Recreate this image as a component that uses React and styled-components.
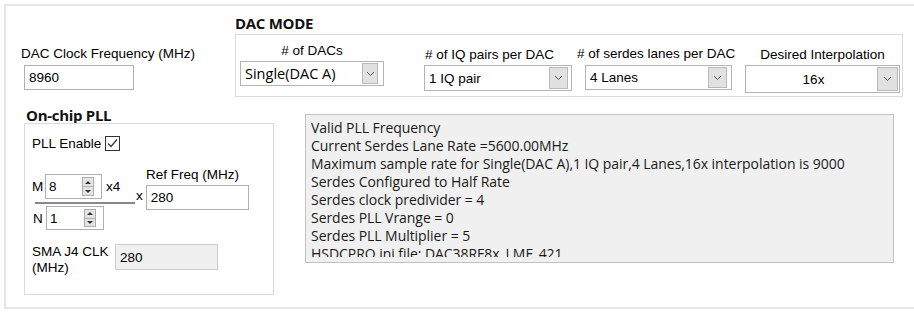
import React from "react";
import styled, { createGlobalStyle } from "styled-components";

const GlobalStyle = createGlobalStyle`
  html, body {
    margin: 0;
    padding: 0;
    background: #ffffff;
    overflow: hidden;
  }
  body {
    font-family: "Liberation Sans", Arial, sans-serif;
    font-size: 13.5px;
    color: #000000;
  }
`;

const Page = styled.div`
  width: 914px;
  height: 313px;
  padding: 4px 0 0 4px;
  box-sizing: border-box;
  overflow: hidden;
`;

const Frame = styled.div`
  width: 930px;
  height: 305px;
  box-sizing: border-box;
  border: 2px solid #e6e6e6;
  display: flex;
  flex-direction: column;
`;

const TopRow = styled.div`
  display: flex;
  align-items: flex-start;
  height: 91px;
`;

const ClockField = styled.div`
  width: 229px;
  padding: 40px 0 0 15px;
  box-sizing: border-box;
  display: flex;
  flex-direction: column;
  align-items: flex-start;
`;

const Label = styled.div`
  font-family: "Liberation Sans", Arial, sans-serif;
  font-size: 13.5px;
  line-height: ${p => p.$lh || 15}px;
  white-space: ${p => (p.$wrap ? "normal" : "nowrap")};
  padding-left: ${p => p.$pl || 0}px;
  width: ${p => (p.$w ? `${p.$w}px` : "auto")};
  flex-shrink: 0;
`;

const TextBox = styled.div`
  width: ${p => p.$w}px;
  height: ${p => p.$h}px;
  margin: ${p => p.$m || "0"};
  box-sizing: border-box;
  border: 1px solid ${p => (p.$readOnly ? "#cccccc" : "#b0b0b0")};
  background: ${p => (p.$readOnly ? "#f0f0f0" : "#ffffff")};
  display: flex;
  align-items: center;
  padding-left: 4px;
  font-size: 13.5px;
  flex-shrink: 0;
`;

const Section = styled.div`
  display: flex;
  flex-direction: column;
  margin-left: ${p => p.$ml || 0}px;
`;

const SectionTitle = styled.div`
  font-family: "Open Sans", "Noto Sans", sans-serif;
  font-weight: 700;
  font-size: 15px;
  line-height: 16px;
  letter-spacing: -0.3px;
  color: #111111;
  margin: ${p => p.$mt || 0}px 0 0 ${p => p.$ml || 0}px;
`;

const GroupBox = styled.div`
  width: 668px;
  height: 63px;
  margin-top: 3px;
  box-sizing: border-box;
  border: 1px solid #dadada;
  display: flex;
  align-items: flex-start;
`;

const Column = styled.div`
  display: flex;
  flex-direction: column;
  align-items: ${p => (p.$center ? "center" : "flex-start")};
  width: ${p => p.$w}px;
  margin-left: ${p => p.$ml}px;
  padding-top: ${p => p.$pt}px;
  flex-shrink: 0;
`;

const SelectBox = styled.div`
  display: flex;
  align-items: center;
  width: ${p => p.$w}px;
  height: ${p => p.$h}px;
  margin: ${p => p.$mt}px 0 0 ${p => p.$ml || 0}px;
  box-sizing: border-box;
  border: 1px solid #b4b4b4;
  background: #ffffff;
  padding: 1px ${p => p.$pr}px 1px 4px;
`;

const SelectValue = styled.span`
  flex: 1;
  text-align: ${p => (p.$center ? "center" : "left")};
  font-family: ${p =>
    p.$segoe
      ? '"Open Sans", "Noto Sans", sans-serif'
      : '"Liberation Sans", Arial, sans-serif'};
  font-size: ${p => (p.$segoe ? "14.5px" : "13.5px")};
  white-space: nowrap;
`;

const DropButton = styled.span`
  width: ${p => p.$bw}px;
  align-self: stretch;
  box-sizing: border-box;
  background: #e1e1e1;
  border: 1px solid #b9b9b9;
  display: flex;
  align-items: center;
  justify-content: center;
`;

const BottomRow = styled.div`
  display: flex;
  align-items: flex-start;
  margin-top: 10px;
`;

const PllBox = styled.div`
  width: 250px;
  height: 172px;
  box-sizing: border-box;
  border: 1px solid #dadada;
  padding: 12px 0 0 7px;
  display: flex;
  flex-direction: column;
`;

const CheckRow = styled.div`
  display: flex;
  align-items: center;
  height: 15px;
`;

const CheckBox = styled.svg`
  margin-left: 4px;
  flex-shrink: 0;
`;

const Fraction = styled.div`
  display: flex;
  align-items: flex-start;
  margin-top: 16px;
`;

const FractionLeft = styled.div`
  width: 104px;
  margin-top: 7px;
  display: flex;
  flex-direction: column;
`;

const SpinRow = styled.div`
  display: flex;
  align-items: center;
`;

const SpinBox = styled.div`
  display: flex;
  align-items: center;
  width: ${p => p.$w}px;
  height: ${p => p.$h}px;
  box-sizing: border-box;
  border: 1px solid #b0b0b0;
  background: #ffffff;
  padding: 2px 7px 2px 3px;
  flex-shrink: 0;
`;

const SpinValue = styled.span`
  flex: 1;
`;

const SpinButtons = styled.div`
  width: 12px;
  align-self: stretch;
  display: flex;
  flex-direction: column;
`;

const SpinArrow = styled.span`
  flex: 1;
  box-sizing: border-box;
  background: #e4e4e4;
  border: 1px solid #adadad;
  border-top-width: ${p => (p.$down ? 0 : 1)}px;
  display: flex;
  align-items: center;
  justify-content: center;

  &::after {
    content: "";
    border-left: 3px solid transparent;
    border-right: 3px solid transparent;
    border-bottom: ${p => (p.$down ? 0 : "3px solid #333")};
    border-top: ${p => (p.$down ? "3px solid #333" : 0)};
  }
`;

const Suffix = styled.span`
  margin-left: 4px;
`;

const Rule = styled.div`
  width: 100px;
  height: 2px;
  margin: 3px 0 2px 3px;
  background: #888888;
`;

const RefColumn = styled.div`
  display: flex;
  flex-direction: column;
`;

const RefRow = styled.div`
  display: flex;
  align-items: center;
  margin-top: 3px;
`;

const Times = styled.span`
  margin: 0 3px 4px 0;
`;

const SmaRow = styled.div`
  display: flex;
  align-items: flex-start;
  margin-top: 14px;
`;

const InfoBox = styled.div`
  width: 589px;
  height: 149px;
  margin: 7px 0 0 31px;
  box-sizing: border-box;
  background: #f0f0f0;
  border: 1px solid #c2c2c2;
  padding: 4px 0 0 5px;
`;

const InfoText = styled.div`
  height: 138px;
  overflow: hidden;
  font-family: "Open Sans", "Noto Sans", sans-serif;
  font-size: 14px;
  line-height: 18px;
  letter-spacing: -0.05px;
  color: #1a1a1a;
  white-space: nowrap;
`;

const Chevron = () => (
  <svg width="9" height="6" viewBox="0 0 9 6">
    <polyline points="1,1 4.5,4.5 8,1" fill="none" stroke="#555" strokeWidth="1" />
  </svg>
);

const Dropdown = ({ value, w, h, mt, ml, pr, bw, center, segoe }) => (
  <SelectBox $w={w} $h={h} $mt={mt} $ml={ml} $pr={pr}>
    <SelectValue $center={center} $segoe={segoe}>
      {value}
    </SelectValue>
    <DropButton $bw={bw}>
      <Chevron />
    </DropButton>
  </SelectBox>
);

const Spinner = ({ value, w, h }) => (
  <SpinBox $w={w} $h={h}>
    <SpinValue>{value}</SpinValue>
    <SpinButtons>
      <SpinArrow />
      <SpinArrow $down />
    </SpinButtons>
  </SpinBox>
);

const infoLines = [
  "Valid PLL Frequency",
  "Current Serdes Lane Rate =5600.00MHz",
  "Maximum sample rate for Single(DAC A),1 IQ pair,4 Lanes,16x interpolation is 9000",
  "Serdes Configured to Half Rate",
  "Serdes clock predivider = 4",
  "Serdes PLL Vrange = 0",
  "Serdes PLL Multiplier = 5",
  "HSDCPRO ini file: DAC38RF8x_LMF_421",
];

export default function App() {
  return (
    <Page>
      <GlobalStyle />
      <Frame>
        <TopRow>
          <ClockField>
            <Label>DAC Clock Frequency (MHz)</Label>
            <TextBox $w={110} $h={25} $m="4px 0 0 3px">
              8960
            </TextBox>
          </ClockField>
          <Section>
            <SectionTitle $mt={9}>DAC MODE</SectionTitle>
            <GroupBox>
              <Column $w={144} $ml={4} $pt={8} $center>
                <Label># of DACs</Label>
                <Dropdown value="Single(DAC A)" w={144} h={25} mt={3} pr={5} bw={16} segoe />
              </Column>
              <Column $w={148} $ml={40} $pt={12}>
                <Label $pl={1}># of IQ pairs per DAC</Label>
                <Dropdown value="1 IQ pair" w={148} h={26} mt={3} pr={3} bw={19} />
              </Column>
              <Column $w={161} $ml={5} $pt={11}>
                <Label># of serdes lanes per DAC</Label>
                <Dropdown value="4 Lanes" w={147} h={25} mt={4} ml={8} pr={4} bw={19} />
              </Column>
              <Column $w={155} $ml={7} $pt={12} $center>
                <Label>Desired Interpolation</Label>
                <Dropdown value="16x" w={155} h={28} mt={3} pr={1} bw={21} center />
              </Column>
            </GroupBox>
          </Section>
        </TopRow>

        <BottomRow>
          <Section $ml={18}>
            <SectionTitle $ml={2}>On-chip PLL</SectionTitle>
            <PllBox>
              <CheckRow>
                <Label>PLL Enable</Label>
                <CheckBox width="15" height="15" viewBox="0 0 15 15">
                  <rect x="0.5" y="0.5" width="14" height="14" fill="#fff" stroke="#333" />
                  <polyline points="3,7.5 6,10.5 12,3.5" fill="none" stroke="#333" strokeWidth="1.2" />
                </CheckBox>
              </CheckRow>

              <Fraction>
                <FractionLeft>
                  <SpinRow>
                    <Label $w={13}>M</Label>
                    <Spinner value="8" w={57} h={25} />
                    <Suffix>x4</Suffix>
                  </SpinRow>
                  <Rule />
                  <SpinRow>
                    <Label $w={13} $pl={1}>N</Label>
                    <Spinner value="1" w={58} h={24} />
                  </SpinRow>
                </FractionLeft>
                <RefColumn>
                  <Label $pl={10}>Ref Freq (MHz)</Label>
                  <RefRow>
                    <Times>x</Times>
                    <TextBox $w={103} $h={25}>280</TextBox>
                  </RefRow>
                </RefColumn>
              </Fraction>

              <SmaRow>
                <Label $w={83} $lh={16} $wrap>
                  SMA J4 CLK (MHz)
                </Label>
                <TextBox $w={103} $h={26} $readOnly>
                  280
                </TextBox>
              </SmaRow>
            </PllBox>
          </Section>

          <InfoBox>
            <InfoText>
              {infoLines.map(line => (
                <div key={line}>{line}</div>
              ))}
            </InfoText>
          </InfoBox>
        </BottomRow>
      </Frame>
    </Page>
  );
}
